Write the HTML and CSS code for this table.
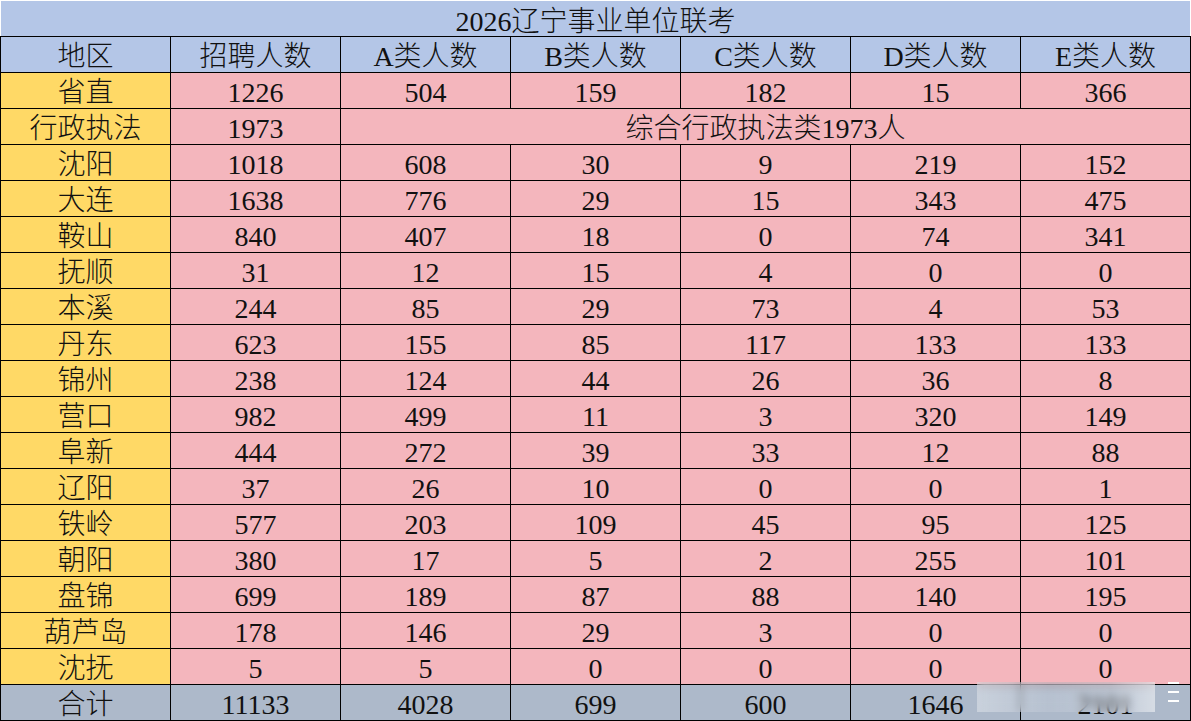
FILE: index.html
```html
<!DOCTYPE html>
<html lang="zh">
<head>
<meta charset="utf-8">
<title>2026辽宁事业单位联考</title>
<link rel="stylesheet" href="styles.css">
</head>
<body>
<div class="sheet">
  <div class="title">2026辽宁事业单位联考</div>
  <table class="grid">
    <colgroup>
      <col class="c"><col class="c"><col class="c"><col class="c"><col class="c"><col class="c"><col class="c">
    </colgroup>
    <thead>
      <tr class="head"><th>地区</th><th>招聘人数</th><th>A类人数</th><th>B类人数</th><th>C类人数</th><th>D类人数</th><th>E类人数</th></tr>
    </thead>
    <tbody>
      <tr><th>省直</th><td>1226</td><td>504</td><td>159</td><td>182</td><td>15</td><td>366</td></tr>
      <tr><th>行政执法</th><td>1973</td><td colspan="5">综合行政执法类1973人</td></tr>
      <tr><th>沈阳</th><td>1018</td><td>608</td><td>30</td><td>9</td><td>219</td><td>152</td></tr>
      <tr><th>大连</th><td>1638</td><td>776</td><td>29</td><td>15</td><td>343</td><td>475</td></tr>
      <tr><th>鞍山</th><td>840</td><td>407</td><td>18</td><td>0</td><td>74</td><td>341</td></tr>
      <tr><th>抚顺</th><td>31</td><td>12</td><td>15</td><td>4</td><td>0</td><td>0</td></tr>
      <tr><th>本溪</th><td>244</td><td>85</td><td>29</td><td>73</td><td>4</td><td>53</td></tr>
      <tr><th>丹东</th><td>623</td><td>155</td><td>85</td><td>117</td><td>133</td><td>133</td></tr>
      <tr><th>锦州</th><td>238</td><td>124</td><td>44</td><td>26</td><td>36</td><td>8</td></tr>
      <tr><th>营口</th><td>982</td><td>499</td><td>11</td><td>3</td><td>320</td><td>149</td></tr>
      <tr><th>阜新</th><td>444</td><td>272</td><td>39</td><td>33</td><td>12</td><td>88</td></tr>
      <tr><th>辽阳</th><td>37</td><td>26</td><td>10</td><td>0</td><td>0</td><td>1</td></tr>
      <tr><th>铁岭</th><td>577</td><td>203</td><td>109</td><td>45</td><td>95</td><td>125</td></tr>
      <tr><th>朝阳</th><td>380</td><td>17</td><td>5</td><td>2</td><td>255</td><td>101</td></tr>
      <tr><th>盘锦</th><td>699</td><td>189</td><td>87</td><td>88</td><td>140</td><td>195</td></tr>
      <tr><th>葫芦岛</th><td>178</td><td>146</td><td>29</td><td>3</td><td>0</td><td>0</td></tr>
      <tr><th>沈抚</th><td>5</td><td>5</td><td>0</td><td>0</td><td>0</td><td>0</td></tr>
    </tbody>
    <tfoot>
      <tr class="total"><th>合计</th><td>11133</td><td>4028</td><td>699</td><td>600</td><td>1646</td><td>2101</td></tr>
    </tfoot>
  </table>
  <div class="watermark">
    <span class="wm-blur"></span>
    <span class="wm-lines"><i></i><i></i><i></i></span>
  </div>
</div>
</body>
</html>
```
FILE: styles.css
```css
html, body {
  margin: 0;
  padding: 0;
  background: #ffffff;
}
body {
  font-family: "Liberation Serif", "Noto Sans CJK SC", serif;
  color: #111111;
}
.sheet {
  position: relative;
  width: 1191px;
  height: 721px;
  padding-top: 1px;
  box-sizing: border-box;
  overflow: hidden;
}
.title {
  margin-left: 1px;
  width: 1189px;
  height: 35px;
  background: #b4c6e7;
  font-size: 28px;
  font-weight: 300;
  line-height: 41px;
  text-align: center;
  overflow: hidden;
}
.grid {
  border-collapse: collapse;
  table-layout: fixed;
  width: 1191px;
  margin-top: -0.5px;
}
.grid .c {
  width: 170px;
}
.grid th,
.grid td {
  border: 1px solid #000000;
  height: 35px;
  box-sizing: border-box;
  padding: 5px 0 0 0;
  font-size: 28px;
  font-weight: 300;
  line-height: 30px;
  text-align: center;
  vertical-align: top;
  white-space: nowrap;
  overflow: hidden;
}
.grid thead th {
  background: #b4c6e7;
}
.grid tbody th {
  background: #ffd966;
}
.grid tbody td {
  background: #f4b6bd;
}
.grid tfoot th,
.grid tfoot td {
  background: #adb9ca;
}
.watermark {
  position: absolute;
  left: 975px;
  top: 676px;
  width: 210px;
  height: 40px;
}
.wm-blur {
  position: absolute;
  left: 2px;
  top: 6px;
  width: 178px;
  height: 30px;
  backdrop-filter: blur(4px);
  background: linear-gradient(90deg, rgba(255,255,255,0.35), rgba(255,255,255,0.12) 40%, rgba(255,255,255,0.2) 75%, rgba(255,255,255,0.5));
}
.wm-lines {
  position: absolute;
  left: 193px;
  top: 6px;
  display: flex;
  flex-direction: column;
  gap: 7px;
}
.wm-lines i {
  display: block;
  width: 11px;
  height: 2px;
  background: #ffffff;
}
```
